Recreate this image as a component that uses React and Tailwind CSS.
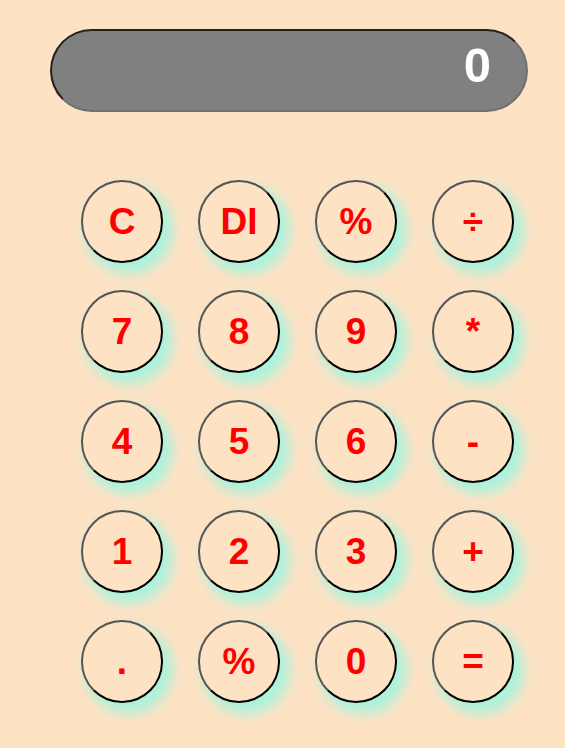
export default function App() {
  const keys = ["C","DI","%","÷","7","8","9","*","4","5","6","-","1","2","3","+",".","%","0","="];
  return (
    <div className="w-[565px] h-[748px] bg-[#fde2c4] overflow-hidden" style={{fontFamily: '"Liberation Sans", Arial, sans-serif'}}>
      <div className="pt-[29px] pl-[50px]">
        <div className="w-[478px] h-[83px] rounded-full bg-[#808080] border-2 border-t-[#222] border-l-[#222] border-b-[#707070] border-r-[#707070] flex items-center justify-end pr-[35px] pb-[10px]">
          <span className="text-white font-bold text-[49px] leading-none">0</span>
        </div>
      </div>
      <div className="pl-[81px] pt-[68px] grid grid-cols-[repeat(4,82px)] gap-x-[35px] gap-y-[27px]">
        {keys.map((k, i) => (
          <div key={i} className="w-[82px] h-[83px] rounded-full border-2 border-t-[#555] border-l-[#555] border-b-black border-r-black bg-[#fde2c4] shadow-[7px_8px_12px_3px_#aef2dc] flex items-center justify-center">
            <span className="text-[#ff0000] font-bold text-[37px] leading-none">{k}</span>
          </div>
        ))}
      </div>
    </div>
  );
}
